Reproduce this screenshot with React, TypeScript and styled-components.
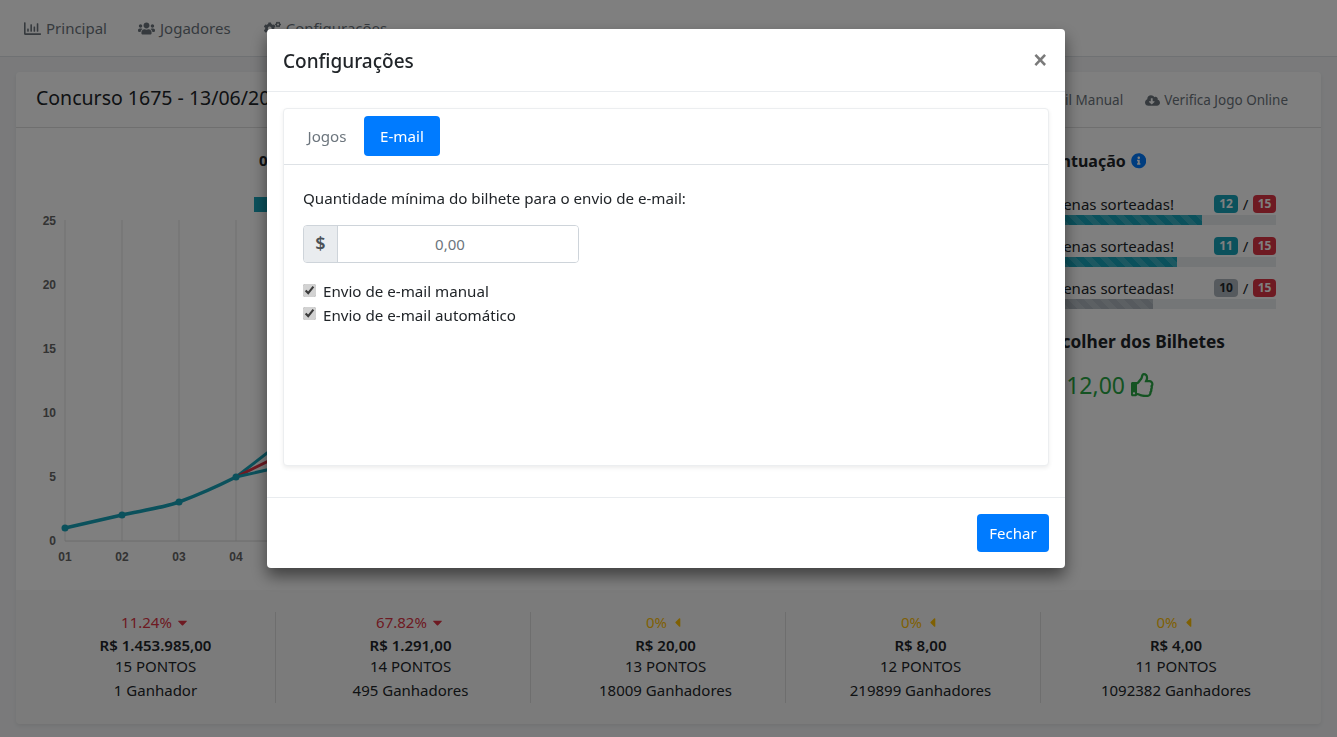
import React from 'react';
import styled, { createGlobalStyle } from 'styled-components';
import {
  FaRegChartBar,
  FaUsers,
  FaCogs,
  FaEnvelope,
  FaCloudDownloadAlt,
  FaInfoCircle,
  FaRegThumbsUp,
  FaCaretDown,
  FaCaretLeft,
} from 'react-icons/fa';

const GlobalStyle = createGlobalStyle`
  html, body {
    margin: 0;
    height: 100%;
    overflow: hidden;
    background: #f4f5f7;
    color: #212529;
    font-family: "Noto Sans", "Open Sans", sans-serif;
    font-size: 15px;
    line-height: 1.5;
  }
  * { box-sizing: border-box; }
`;

const NavBar = styled.nav`
  display: flex;
  align-items: center;
  gap: 31px;
  height: 57px;
  padding: 0 24px;
  background: #fff;
  border-bottom: 1px solid #dee2e6;
`;

const NavLink = styled.a`
  display: flex;
  align-items: center;
  gap: 5px;
  color: #6c757d;
  svg { font-size: 17px; }
  &:last-child { margin-left: 2px; }
`;

const Card = styled.section`
  display: flex;
  flex-direction: column;
  height: 652px;
  margin: 15px 16px 0;
  background: #fff;
  border-radius: 4px;
  box-shadow: 0 2px 4px rgba(0, 0, 0, 0.075);
`;

const CardHeader = styled.header`
  display: flex;
  align-items: center;
  justify-content: space-between;
  height: 56px;
  padding: 0 33px 0 20px;
  border-bottom: 1px solid #dfdfdf;
`;

const CardTitle = styled.h1`
  margin: 0 0 3px;
  font-size: 19.5px;
  font-weight: 400;
`;

const HeaderActions = styled.div`
  display: flex;
  gap: 22px;
  margin-top: 2px;
`;

const HeaderAction = styled.a`
  display: flex;
  align-items: center;
  gap: 4px;
  color: #6c757d;
  font-size: 13.5px;
  svg { font-size: 15px; }
`;

const CardBody = styled.div`
  flex: 1;
  display: flex;
  justify-content: space-between;
  padding: 21px 45px 0 20px;
`;

const ChartColumn = styled.div`
  width: 860px;
  display: flex;
  flex-direction: column;
`;

const ChartTitle = styled.h2`
  margin: 0 0 19px;
  padding-left: 223px;
  font-size: 15px;
  font-weight: 700;
  line-height: 22px;
  white-space: nowrap;
`;

const ChartSvg = styled.svg`
  display: block;
`;

const ScoreColumn = styled.aside`
  width: 369px;
  display: flex;
  flex-direction: column;
`;

const ScoreHeading = styled.h3`
  display: flex;
  align-items: center;
  justify-content: center;
  gap: 5px;
  margin: 0 0 20px 4px;
  font-size: 16px;
  font-weight: 700;
  svg { color: #007bff; font-size: 15.5px; }
`;

const ScoreRow = styled.div`
  height: 42px;
`;

const ScoreLine = styled.div`
  display: flex;
  align-items: center;
  justify-content: flex-end;
  height: 22px;
`;

const ScoreLabel = styled.span`
  margin-right: 40px;
`;

const Badge = styled.span<{ $tone: string; $dark?: boolean }>`
  display: inline-block;
  width: ${(p) => (p.$tone === '#dc3545' ? 23 : 24)}px;
  height: 18px;
  border-radius: 4px;
  background: ${(p) => p.$tone};
  color: ${(p) => (p.$dark ? '#212529' : '#fff')};
  font-size: 12px;
  font-weight: 700;
  line-height: 18px;
  text-align: center;
`;

const Slash = styled.span`
  width: 15px;
  text-align: center;
`;

const Track = styled.div`
  height: 10px;
  background: #e9ecef;
`;

const Fill = styled.div<{ $tone: string }>`
  height: 100%;
  background-color: ${(p) => p.$tone};
  background-image: linear-gradient(
    45deg,
    rgba(255, 255, 255, 0.15) 25%,
    transparent 25%,
    transparent 50%,
    rgba(255, 255, 255, 0.15) 50%,
    rgba(255, 255, 255, 0.15) 75%,
    transparent 75%,
    transparent
  );
  background-size: 16px 16px;
`;

const CollectHeading = styled.h3`
  margin: 10px 51px 12px 0;
  font-size: 17.3px;
  font-weight: 700;
  text-align: right;
  white-space: nowrap;
`;

const CollectValue = styled.div`
  display: flex;
  align-items: center;
  justify-content: flex-end;
  gap: 6px;
  margin-right: 121px;
  color: #28a745;
  font-size: 23px;
  line-height: 36px;
  svg { font-size: 24px; }
`;

const CardFooter = styled.footer`
  display: grid;
  grid-template-columns: repeat(5, 255px);
  height: 134px;
  padding: 22px 4px 0 5px;
  background: rgba(0, 0, 0, 0.03);
  border-radius: 0 0 4px 4px;
`;

const Prize = styled.div<{ $last?: boolean }>`
  height: 91px;
  padding-left: 15px;
  border-right: ${(p) => (p.$last ? 'none' : '1px solid #dcdcdc')};
  text-align: center;
`;

const PrizePercent = styled.div<{ $tone: string }>`
  display: flex;
  align-items: center;
  justify-content: center;
  gap: 3px;
  height: 21px;
  color: ${(p) => p.$tone};
`;

const PrizeValue = styled.div`
  height: 23px;
  line-height: 24px;
  font-weight: 600;
`;

const PrizePoints = styled.div`
  height: 23px;
  line-height: 20px;
`;

const PrizeWinners = styled.div`
  height: 24px;
  line-height: 22px;
`;

const Backdrop = styled.div`
  position: fixed;
  inset: 0;
  background: rgba(0, 0, 0, 0.5);
`;

const Modal = styled.div`
  position: fixed;
  top: 29px;
  left: 267px;
  display: flex;
  flex-direction: column;
  width: 798px;
  height: 539px;
  background: #fff;
  border-radius: 4px;
  box-shadow: 0 8px 16px rgba(0, 0, 0, 0.5);
`;

const ModalHeader = styled.header`
  display: flex;
  align-items: center;
  justify-content: space-between;
  height: 63px;
  padding: 0 18px 0 16px;
  border-bottom: 1px solid #e9ecef;
`;

const ModalTitle = styled.h5`
  margin: 2px 0 0;
  font-size: 19px;
  font-weight: 500;
`;

const CloseButton = styled.button`
  padding: 0;
  border: 0;
  background: none;
  color: #7a7a7a;
  font-family: "Liberation Sans", sans-serif;
  font-size: 23px;
  font-weight: 700;
  line-height: 1;
`;

const ModalBody = styled.div`
  flex: 1;
  padding: 16px;
`;

const TabsCard = styled.div`
  height: 358px;
  background: #fff;
  border: 1px solid #eceef0;
  border-radius: 4px;
  box-shadow: 0 2px 4px rgba(0, 0, 0, 0.075);
`;

const TabBar = styled.div`
  display: flex;
  gap: 0.5px;
  height: 56px;
  padding: 7px 7px 0;
  border-bottom: 1px solid #dee2e6;
  font-size: 15.15px;
`;

const Tab = styled.a<{ $active?: boolean }>`
  display: flex;
  align-items: center;
  height: 40px;
  padding: 0 16.5px;
  border-radius: 4px;
  background: ${(p) => (p.$active ? '#007bff' : 'transparent')};
  color: ${(p) => (p.$active ? '#fff' : '#6c757d')};
`;

const TabContent = styled.div`
  padding: 22px 19px;
  font-size: 15.15px;
`;

const FieldLabel = styled.p`
  margin: 0 0 15px;
`;

const InputGroup = styled.div`
  display: flex;
  width: 276px;
  height: 38px;
  margin-bottom: 17px;
  border: 1px solid #ced4da;
  border-radius: 4px;
  overflow: hidden;
`;

const InputAddon = styled.span`
  display: flex;
  align-items: center;
  justify-content: center;
  width: 34px;
  background: #e9ecef;
  border-right: 1px solid #ced4da;
  color: #495057;
  font-size: 18px;
  font-weight: 600;
`;

const AmountInput = styled.input`
  flex: 1;
  min-width: 0;
  padding: 1px 16px 0 0;
  border: 0;
  outline: 0;
  font: inherit;
  font-size: 15px;
  text-align: center;
  &::placeholder { color: #6c757d; opacity: 1; }
`;

const CheckRow = styled.label`
  display: flex;
  align-items: center;
  gap: 7px;
  height: 23.5px;
  input {
    width: 13px;
    height: 13px;
    margin: 0 0 2px;
    accent-color: #d2d2d2;
  }
`;

const ModalFooter = styled.footer`
  display: flex;
  align-items: center;
  justify-content: flex-end;
  height: 71px;
  padding: 0 16px;
  border-top: 1px solid #e9ecef;
`;

const PrimaryButton = styled.button`
  width: 72px;
  height: 38px;
  padding: 0;
  border: 0;
  border-radius: 4px;
  background: #007bff;
  color: #fff;
  font: inherit;
`;

const teal = '#17a2b8';
const red = '#dc3545';
const amber = '#ffc107';

const scores = [
  { label: '12 dezenas sorteadas!', hits: '12', pct: 80, tone: teal, dark: false },
  { label: '11 dezenas sorteadas!', hits: '11', pct: 73.3, tone: teal, dark: false },
  { label: '10 dezenas sorteadas!', hits: '10', pct: 66.6, tone: '#adb5bd', dark: true },
];

const prizes = [
  { pct: '11.24%', tone: red, down: true, value: 'R$ 1.453.985,00', points: '15 PONTOS', winners: '1 Ganhador' },
  { pct: '67.82%', tone: red, down: true, value: 'R$ 1.291,00', points: '14 PONTOS', winners: '495 Ganhadores' },
  { pct: '0%', tone: amber, down: false, value: 'R$ 20,00', points: '13 PONTOS', winners: '18009 Ganhadores' },
  { pct: '0%', tone: amber, down: false, value: 'R$ 8,00', points: '12 PONTOS', winners: '219899 Ganhadores' },
  { pct: '0%', tone: amber, down: false, value: 'R$ 4,00', points: '11 PONTOS', winners: '1092382 Ganhadores' },
];

// chart coordinates are relative to the svg, which starts at page x=36, y=190
const ox = 36;
const oy = 190;
const yTicks = [25, 20, 15, 10, 5, 0];
const xTicks = ['01', '02', '03', '04'];
const tickX = (i: number) => 65 + 57 * i - ox;
const tickY = (v: number) => 541 - 64 * (v / 5) - oy;
const dots = [
  [65, 528],
  [122, 515],
  [179, 502],
  [236, 477],
];

const px = (x: number) => x - ox;
const py = (y: number) => y - oy;

const sharedLine = `M${px(65)} ${py(528)} L${px(122)} ${py(515)} C${px(140)} ${py(511)} ${px(162)} ${py(508)} ${px(179)} ${py(502)} C${px(198)} ${py(495)} ${px(216)} ${py(487)} ${px(236)} ${py(477)}`;

const Chart = () => (
  <ChartSvg width={860} height={385} viewBox="0 0 860 385">
    <rect x={254 - ox} y={197 - oy} width={40} height={15} fill={teal} />
    {yTicks.map((v) => (
      <text key={v} x={20} y={tickY(v) + 4} textAnchor="end" fontFamily="Liberation Sans" fontSize="12" fontWeight="700" fill="#666">
        {v}
      </text>
    ))}
    {[0, 1, 2, 3, 4].map((i) => (
      <line key={i} x1={tickX(i)} x2={tickX(i)} y1={30} y2={351} stroke="#e2e2e2" />
    ))}
    <line x1={tickX(0)} x2={400} y1={tickY(0)} y2={tickY(0)} stroke="#d8d8d8" />
    {xTicks.map((t, i) => (
      <text key={t} x={tickX(i)} y={371} textAnchor="middle" fontFamily="Liberation Sans" fontSize="12" fontWeight="700" fill="#666">
        {t}
      </text>
    ))}
    <line x1={px(236)} y1={py(477)} x2={px(293)} y2={py(433)} stroke={teal} strokeWidth="3" />
    <line x1={px(236)} y1={py(477)} x2={px(293)} y2={py(449)} stroke={red} strokeWidth="3" />
    <line x1={px(236)} y1={py(477)} x2={px(293)} y2={py(464)} stroke={teal} strokeWidth="3" />
    <path d={sharedLine} fill="none" stroke={teal} strokeWidth="3.5" />
    {dots.map(([x, y]) => (
      <circle key={x} cx={px(x)} cy={py(y)} r="3.5" fill={teal} />
    ))}
  </ChartSvg>
);

export default function App() {
  return (
    <>
      <GlobalStyle />
      <NavBar>
        <NavLink><FaRegChartBar /> Principal</NavLink>
        <NavLink><FaUsers /> Jogadores</NavLink>
        <NavLink><FaCogs /> Configurações</NavLink>
      </NavBar>
      <Card>
        <CardHeader>
          <CardTitle>Concurso 1675 - 13/06/2018</CardTitle>
          <HeaderActions>
            <HeaderAction><FaEnvelope /> E-mail Manual</HeaderAction>
            <HeaderAction><FaCloudDownloadAlt /> Verifica Jogo Online</HeaderAction>
          </HeaderActions>
        </CardHeader>
        <CardBody>
          <ChartColumn>
            <ChartTitle>01 02 03 05 06 07 09 11 12 14 15 18 20 21 24</ChartTitle>
            <Chart />
          </ChartColumn>
          <ScoreColumn>
            <ScoreHeading>Pontuação <FaInfoCircle /></ScoreHeading>
            {scores.map((s) => (
              <ScoreRow key={s.hits}>
                <ScoreLine>
                  <ScoreLabel>{s.label}</ScoreLabel>
                  <Badge $tone={s.tone} $dark={s.dark}>{s.hits}</Badge>
                  <Slash>/</Slash>
                  <Badge $tone={red}>15</Badge>
                </ScoreLine>
                <Track>
                  <Fill $tone={s.tone} style={{ width: `${s.pct}%` }} />
                </Track>
              </ScoreRow>
            ))}
            <CollectHeading>Total a Recolher dos Bilhetes</CollectHeading>
            <CollectValue>R$ 112,00 <FaRegThumbsUp /></CollectValue>
          </ScoreColumn>
        </CardBody>
        <CardFooter>
          {prizes.map((p, i) => (
            <Prize key={p.points} $last={i === prizes.length - 1}>
              <PrizePercent $tone={p.tone}>
                {p.pct} {p.down ? <FaCaretDown /> : <FaCaretLeft />}
              </PrizePercent>
              <PrizeValue>{p.value}</PrizeValue>
              <PrizePoints>{p.points}</PrizePoints>
              <PrizeWinners>{p.winners}</PrizeWinners>
            </Prize>
          ))}
        </CardFooter>
      </Card>
      <Backdrop />
      <Modal>
        <ModalHeader>
          <ModalTitle>Configurações</ModalTitle>
          <CloseButton aria-label="Fechar">×</CloseButton>
        </ModalHeader>
        <ModalBody>
          <TabsCard>
            <TabBar>
              <Tab>Jogos</Tab>
              <Tab $active>E-mail</Tab>
            </TabBar>
            <TabContent>
              <FieldLabel>Quantidade mínima do bilhete para o envio de e-mail:</FieldLabel>
              <InputGroup>
                <InputAddon>$</InputAddon>
                <AmountInput placeholder="0,00" />
              </InputGroup>
              <CheckRow><input type="checkbox" defaultChecked /> Envio de e-mail manual</CheckRow>
              <CheckRow><input type="checkbox" defaultChecked /> Envio de e-mail automático</CheckRow>
            </TabContent>
          </TabsCard>
        </ModalBody>
        <ModalFooter>
          <PrimaryButton>Fechar</PrimaryButton>
        </ModalFooter>
      </Modal>
    </>
  );
}
